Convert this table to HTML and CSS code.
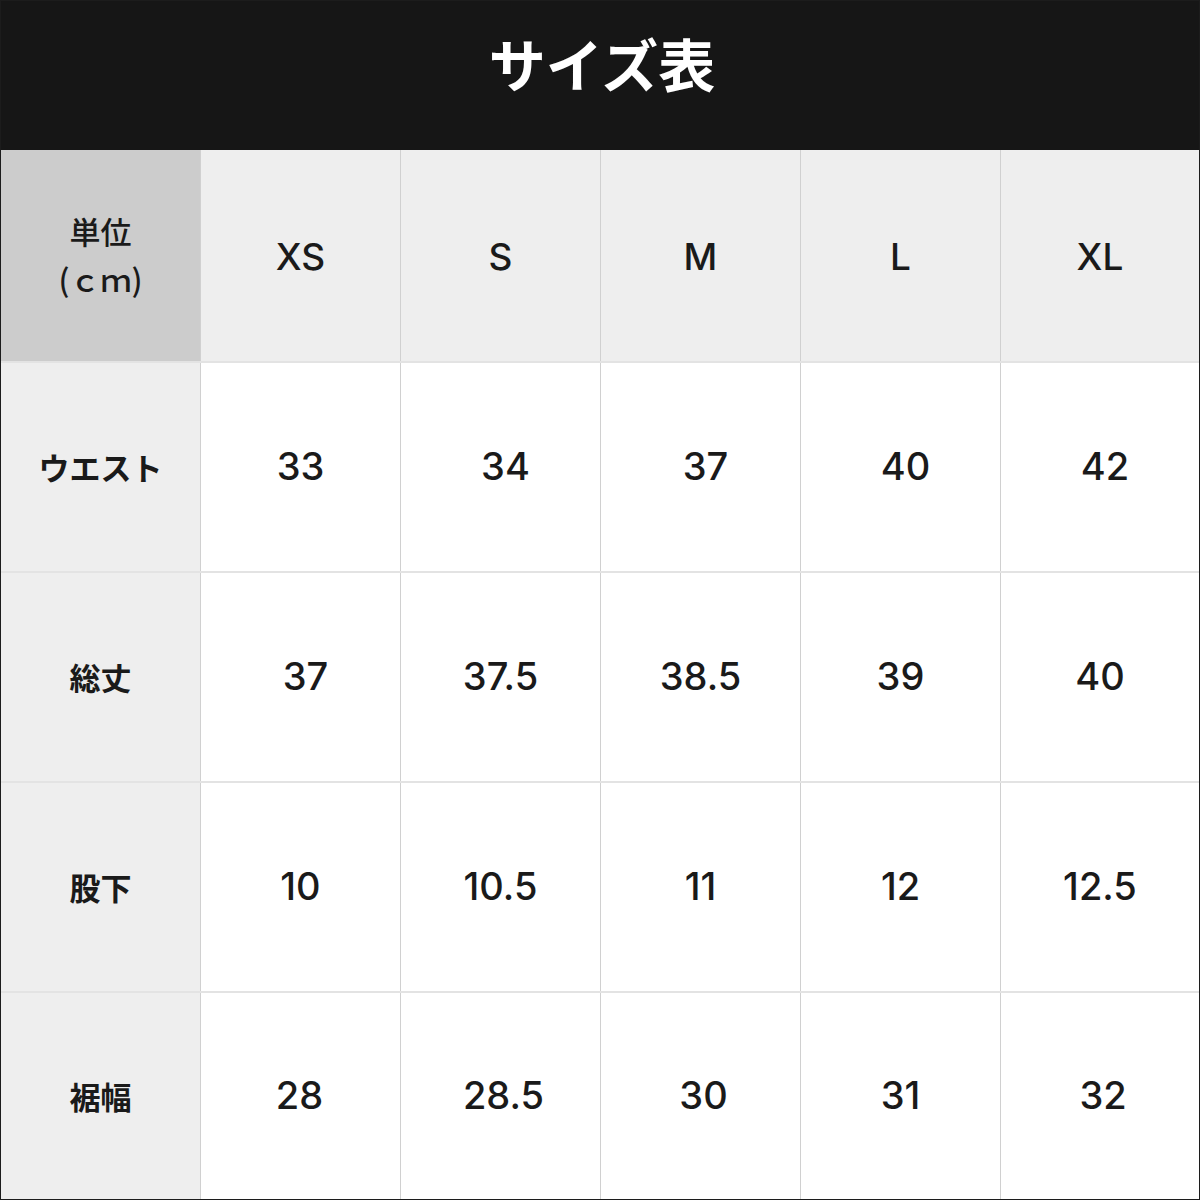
FILE: index.html
```html
<!DOCTYPE html>
<html lang="ja">
<head>
<meta charset="utf-8">
<title>サイズ表</title>
<link rel="stylesheet" href="styles.css">
</head>
<body>
<div class="sheet">
  <header class="title-bar"><h1 class="title">サイズ表</h1></header>
  <div class="table">
    <div class="row head">
      <div class="cell unit">単位<br>(ｃｍ)</div>
      <div class="cell size">XS</div>
      <div class="cell size">S</div>
      <div class="cell size">M</div>
      <div class="cell size">L</div>
      <div class="cell size">XL</div>
    </div>
    <div class="row waist">
      <div class="cell label">ウエスト</div>
      <div class="cell num">33</div>
      <div class="cell num shift">34</div>
      <div class="cell num shift">37</div>
      <div class="cell num shift">40</div>
      <div class="cell num shift">42</div>
    </div>
    <div class="row">
      <div class="cell label">総丈</div>
      <div class="cell num shift">37</div>
      <div class="cell num">37.5</div>
      <div class="cell num">38.5</div>
      <div class="cell num">39</div>
      <div class="cell num">40</div>
    </div>
    <div class="row">
      <div class="cell label">股下</div>
      <div class="cell num">10</div>
      <div class="cell num">10.5</div>
      <div class="cell num">11</div>
      <div class="cell num">12</div>
      <div class="cell num">12.5</div>
    </div>
    <div class="row">
      <div class="cell label">裾幅</div>
      <div class="cell num nudge-left">28</div>
      <div class="cell num nudge">28.5</div>
      <div class="cell num nudge">30</div>
      <div class="cell num">31</div>
      <div class="cell num nudge">32</div>
    </div>
  </div>
</div>
</body>
</html>
```

FILE: styles.css
```css
html, body {
  margin: 0;
  padding: 0;
  background: #ffffff;
}
.sheet {
  box-sizing: border-box;
  width: 1200px;
  height: 1200px;
  border: 1px solid #1c1c1c;
  display: flex;
  flex-direction: column;
  font-family: "Inter", "Noto Sans CJK JP", sans-serif;
  color: #1a1a1a;
}
.title-bar {
  height: 149px;
  background: #161616;
  display: flex;
  align-items: center;
  justify-content: center;
}
.title {
  margin: 0 0 26px 4px;
  font-family: "Noto Sans CJK JP", sans-serif;
  font-weight: 700;
  font-size: 57px;
  color: #ffffff;
  line-height: 1;
}
.table {
  flex: 1;
  display: grid;
  grid-template-rows: 211px 210px 210px 210px 1fr;
}
.row {
  display: grid;
  grid-template-columns: 199px 200px 200px 200px 200px 1fr;
  border-top: 2px solid #e3e3e3;
}
.row.head {
  border-top: 0;
  background: #eeeeee;
}
.cell {
  display: flex;
  align-items: center;
  justify-content: center;
  text-align: center;
  border-left: 1px solid #d0d0d0;
}
.cell:first-child {
  border-left: 0;
}
.unit {
  background: #cccccc;
  font-family: "Noto Sans CJK JP", sans-serif;
  font-weight: 500;
  font-size: 31px;
  line-height: 48px;
  padding-bottom: 2px;
}
.size {
  font-size: 37px;
  font-weight: 500;
  padding-top: 2px;
}
.label {
  background: #eeeeee;
  font-family: "Noto Sans CJK JP", sans-serif;
  font-weight: 700;
  font-size: 31px;
  padding-bottom: 2px;
}
.num {
  font-size: 38px;
  font-weight: 500;
  padding-bottom: 2px;
}
.num.shift {
  padding-left: 10px;
}
.num.nudge {
  padding-left: 6px;
}
.num.nudge-left {
  padding-right: 2px;
}
```
